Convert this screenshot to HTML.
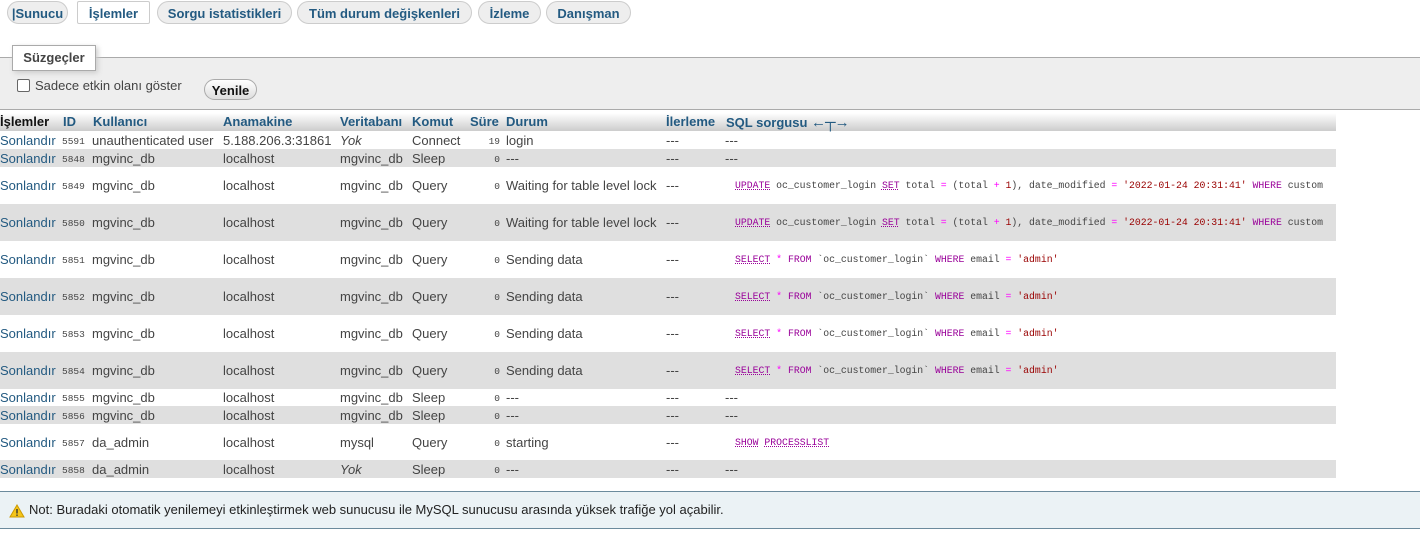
<!DOCTYPE html>
<html><head><meta charset="utf-8"><style>
body{margin:0;width:1420px;height:536px;background:#fff;font-family:"Liberation Sans",Arial,sans-serif;font-size:13px;color:#444;position:relative;overflow:hidden}
.tab{position:absolute;top:1px;height:23px;line-height:23px;border:1px solid #ccc;border-radius:12px;background:#eee;color:#235a81;font-weight:bold;font-size:13px;text-align:center;box-sizing:border-box}
.tab.a{background:#fff;border-radius:2px}
.fs{position:absolute;left:0;top:57px;width:1420px;height:53px;background:#eee;border-top:1px solid #aaa;border-bottom:1px solid #aaa;box-sizing:border-box}
.lg{position:absolute;left:12px;top:45px;width:84px;height:26px;background:#fff;border:1px solid #aaa;box-shadow:2px 2px 5px #ccc;box-sizing:border-box;font-weight:bold;color:#444;line-height:24px;text-align:center}
.r{position:absolute;left:0;width:1336px}
.r.g{background:#dfdfdf}
.r.h{background:linear-gradient(#fff,#ccc);color:#235a81;font-weight:bold;top:113px;height:18px}
.c{position:absolute;white-space:nowrap}
.l{color:#235a81}
.id{font-family:"Liberation Mono",monospace;font-size:9.5px}
.sql{font-family:"Liberation Mono",monospace;font-size:9.8px;color:#444}
.k{color:#909;text-decoration:underline dotted}
.o{color:#f0f}
.n{color:#900}
.s{color:#900}
</style></head><body>
<div class="tab" style="left:7px;width:61px">|Sunucu</div>
<div class="tab a" style="left:77px;width:73px">İşlemler</div>
<div class="tab" style="left:157px;width:135px">Sorgu istatistikleri</div>
<div class="tab" style="left:297px;width:175px">Tüm durum değişkenleri</div>
<div class="tab" style="left:478px;width:63px">İzleme</div>
<div class="tab" style="left:546px;width:85px">Danışman</div>
<div class="fs"></div>
<div class="lg">Süzgeçler</div>
<div style="position:absolute;left:17px;top:79px;width:11px;height:11px;border:1px solid #666;border-radius:2px;background:#fff"></div>
<div style="position:absolute;left:35px;top:78px">Sadece etkin olanı göster</div>
<div style="position:absolute;left:204px;top:79px;width:53px;height:21px;border:1px solid #aaa;border-radius:11px;background:linear-gradient(#fff,#ddd);font-weight:bold;color:#111;text-align:center;line-height:21px;box-sizing:border-box">Yenile</div>

<div class="r h">
<span class="c" style="left:0;top:1px;color:#111">İşlemler</span>
<span class="c" style="left:63px;top:1px">ID</span>
<span class="c" style="left:93px;top:1px">Kullanıcı</span>
<span class="c" style="left:223px;top:1px">Anamakine</span>
<span class="c" style="left:340px;top:1px">Veritabanı</span>
<span class="c" style="left:412px;top:1px">Komut</span>
<span class="c" style="left:470px;top:1px">Süre</span>
<span class="c" style="left:506px;top:1px">Durum</span>
<span class="c" style="left:666px;top:1px">İlerleme</span>
<span class="c" style="left:726px;top:1px">SQL sorgusu <span style="font-weight:normal;font-size:15px;letter-spacing:-1px">←┬→</span></span>
</div>

<div id="rows"></div>
<script>
var rows=[
[131,18,0,'5591','unauthenticated user','5.188.206.3:31861','Yok',1,'Connect','19','login','---'],
[149,18,1,'5848','mgvinc_db','localhost','mgvinc_db',0,'Sleep','0','---','---'],
[167,37,0,'5849','mgvinc_db','localhost','mgvinc_db',0,'Query','0','Waiting for table level lock','U'],
[204,37,1,'5850','mgvinc_db','localhost','mgvinc_db',0,'Query','0','Waiting for table level lock','U'],
[241,37,0,'5851','mgvinc_db','localhost','mgvinc_db',0,'Query','0','Sending data','S'],
[278,37,1,'5852','mgvinc_db','localhost','mgvinc_db',0,'Query','0','Sending data','S'],
[315,37,0,'5853','mgvinc_db','localhost','mgvinc_db',0,'Query','0','Sending data','S'],
[352,37,1,'5854','mgvinc_db','localhost','mgvinc_db',0,'Query','0','Sending data','S'],
[389,17,0,'5855','mgvinc_db','localhost','mgvinc_db',0,'Sleep','0','---','---'],
[406,18,1,'5856','mgvinc_db','localhost','mgvinc_db',0,'Sleep','0','---','---'],
[424,36,0,'5857','da_admin','localhost','mysql',0,'Query','0','starting','P'],
[460,18,1,'5858','da_admin','localhost','Yok',1,'Sleep','0','---','---']];
var U='<span class="k">UPDATE</span> oc_customer_login <span class="k">SET</span> total <span class="o">=</span> (total <span class="o">+</span> <span class="n">1</span>), date_modified <span class="o">=</span> <span class="s">\'2022-01-24 20:31:41\'</span> <span class="k" style="text-decoration:none">WHERE</span> custom';
var S='<span class="k">SELECT</span> <span class="o">*</span> <span class="k" style="text-decoration:none">FROM</span> `oc_customer_login` <span class="k" style="text-decoration:none">WHERE</span> email <span class="o">=</span> <span class="s">\'admin\'</span>';
var P='<span class="k">SHOW</span> <span class="k">PROCESSLIST</span>';
var h='';
rows.forEach(function(r){
var t=Math.round((r[1]-15)/2);
var sq=r[11]=='U'?'<span class="c sql" style="left:735px;top:'+(t+2)+'px">'+U+'</span>':r[11]=='S'?'<span class="c sql" style="left:735px;top:'+(t+2)+'px">'+S+'</span>':r[11]=='P'?'<span class="c sql" style="left:735px;top:'+(t+2)+'px">'+P+'</span>':'<span class="c" style="left:725px;top:'+t+'px">---</span>';
h+='<div class="r'+(r[2]?' g':'')+'" style="top:'+r[0]+'px;height:'+r[1]+'px">'+
'<span class="c l" style="left:0;top:'+t+'px">Sonlandır</span>'+
'<span class="c id" style="left:62px;top:'+(t+3)+'px">'+r[3]+'</span>'+
'<span class="c" style="left:92px;top:'+t+'px">'+r[4]+'</span>'+
'<span class="c" style="left:223px;top:'+t+'px">'+r[5]+'</span>'+
'<span class="c" style="left:340px;top:'+t+'px;'+(r[7]?'font-style:italic':'')+'">'+r[6]+'</span>'+
'<span class="c" style="left:412px;top:'+t+'px">'+r[8]+'</span>'+
'<span class="c id" style="right:'+(1336-500)+'px;top:'+(t+3)+'px">'+r[9]+'</span>'+
'<span class="c" style="left:506px;top:'+t+'px">'+r[10]+'</span>'+
'<span class="c" style="left:666px;top:'+t+'px">---</span>'+sq+'</div>';
});
document.getElementById('rows').innerHTML=h;
</script>
<div style="position:absolute;left:0;top:491px;width:1420px;height:38px;background:#ebf2f5;border-top:1px solid #6b8a9c;border-bottom:1px solid #6b8a9c;box-sizing:border-box;line-height:36px;color:#222">
<svg style="position:absolute;left:9px;top:12px" width="16" height="14" viewBox="0 0 16 14"><path d="M8 1L15 13H1Z" fill="#f5c518" stroke="#c90" stroke-width="1"/><rect x="7.3" y="5" width="1.4" height="4.5" fill="#333"/><rect x="7.3" y="10.5" width="1.4" height="1.4" fill="#333"/></svg>
<span style="position:absolute;left:29px">Not: Buradaki otomatik yenilemeyi etkinleştirmek web sunucusu ile MySQL sunucusu arasında yüksek trafiğe yol açabilir.</span>
</div>
</body></html>
